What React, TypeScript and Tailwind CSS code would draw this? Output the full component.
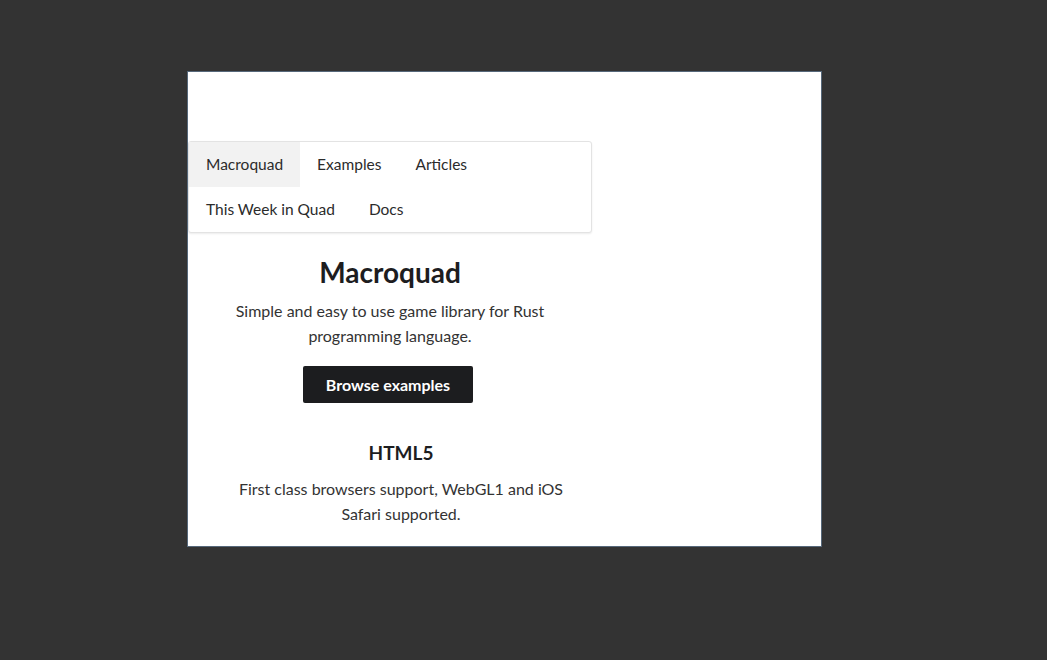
import React from "react";

const navItems = [
  { text: "Macroquad", active: true },
  { text: "Examples", active: false },
  { text: "Articles", active: false },
  { text: "This Week in Quad", active: false },
  { text: "Docs", active: false },
];

const App = () => {
  return (
    <div
      className="min-h-[660px] w-full bg-[#333333] pt-[71px] pl-[187px]"
      style={{ fontFamily: "Lato, 'Noto Sans', sans-serif" }}
    >
      <div className="w-[635px] h-[476px] bg-white border border-[#56687a] overflow-hidden">
        <div className="pt-[69px]">
          {/* Nav */}
          <nav className="w-[404px] flex flex-wrap border border-[#e3e3e3] rounded-[3px] shadow-[0_1px_2px_rgba(0,0,0,0.08)] bg-white">
            {navItems.map((item) => (
              <a
                key={item.text}
                className={
                  "px-[17px] py-3 text-[15.5px] leading-[21px] text-[#2b2b2b] " +
                  (item.active ? "bg-[#f2f2f2]" : "")
                }
              >
                {item.text}
              </a>
            ))}
          </nav>

          {/* Hero */}
          <div className="w-[404px] flex flex-col items-center text-center">
            <h1 className="mt-[23px] text-[28px] leading-[32px] font-bold text-[#1d1d1f]">
              Macroquad
            </h1>
            <p className="mt-[10px] text-[16px] leading-[25px] text-[#333333] whitespace-nowrap">
              Simple and easy to use game library for Rust
              <br />
              programming language.
            </p>
            <button className="mt-[18px] mr-[4px] h-[37px] w-[170px] bg-[#1c1d1f] rounded-[2px] text-white font-bold text-[16px]">
              Browse examples
            </button>
          </div>

          {/* Features */}
          <div className="w-[426px] flex flex-col items-center text-center">
            <h2 className="mt-[38px] text-[19px] leading-[24px] font-bold text-[#1d1d1f]">
              HTML5
            </h2>
            <p className="mt-[11px] text-[16px] leading-[25px] text-[#333333] whitespace-nowrap">
              First class browsers support, WebGL1 and iOS
              <br />
              Safari supported.
            </p>
          </div>
        </div>
      </div>
    </div>
  );
};

export default App;
